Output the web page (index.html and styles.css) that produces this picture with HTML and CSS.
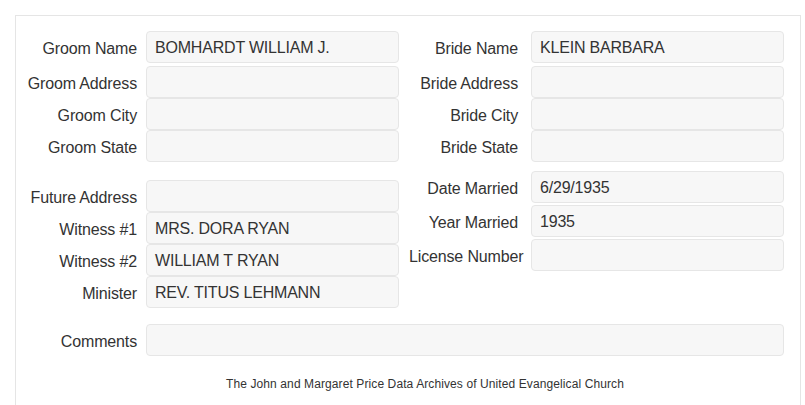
FILE: index.html
```html
<!DOCTYPE html>
<html>
<head>
<meta charset="utf-8">
<link rel="stylesheet" href="styles.css">
</head>
<body>
<div class="page">
  <div class="panel">
    <div class="section top">
      <div class="col col-left">
        <div class="field first"><label>Groom Name</label><div class="box">BOMHARDT WILLIAM J.</div></div>
        <div class="field"><label>Groom Address</label><div class="box"></div></div>
        <div class="field"><label>Groom City</label><div class="box"></div></div>
        <div class="field"><label>Groom State</label><div class="box"></div></div>
      </div>
      <div class="col col-right">
        <div class="field first"><label>Bride Name</label><div class="box">KLEIN BARBARA</div></div>
        <div class="field"><label>Bride Address</label><div class="box"></div></div>
        <div class="field"><label>Bride City</label><div class="box"></div></div>
        <div class="field"><label>Bride State</label><div class="box"></div></div>
      </div>
    </div>
    <div class="section middle">
      <div class="col col-left shifted">
        <div class="field"><label>Future Address</label><div class="box"></div></div>
        <div class="field"><label>Witness #1</label><div class="box">MRS. DORA RYAN</div></div>
        <div class="field"><label>Witness #2</label><div class="box">WILLIAM T RYAN</div></div>
        <div class="field"><label>Minister</label><div class="box">REV. TITUS LEHMANN</div></div>
      </div>
      <div class="col col-right spaced">
        <div class="field"><label>Date Married</label><div class="box">6/29/1935</div></div>
        <div class="field"><label>Year Married</label><div class="box">1935</div></div>
        <div class="field"><label>License Number</label><div class="box"></div></div>
      </div>
    </div>
    <div class="field comments"><label>Comments</label><div class="box"></div></div>
    <div class="footer">The John and Margaret Price Data Archives of United Evangelical Church</div>
  </div>
</div>
</body>
</html>
```

FILE: styles.css
```css
html, body {
  margin: 0;
  padding: 0;
  background: #ffffff;
}

body {
  font-family: "Liberation Sans", Arial, sans-serif;
  color: #333333;
}

.page {
  padding: 15px 4px 0 15px;
}

.panel {
  border: 1px solid #e5e5e5;
  border-bottom: none;
  padding: 15px 16px 40px 0;
  min-height: 400px;
  box-sizing: border-box;
}

.section {
  display: flex;
  align-items: flex-start;
}

.col {
  display: flex;
  flex-direction: column;
}

.col-left {
  width: 383px;
  margin-right: 10px;
}

.col-left .field {
  grid-template-columns: 121px 253px;
  column-gap: 9px;
}

.col-right .field {
  grid-template-columns: 109px 253px;
  column-gap: 13px;
}

.field {
  display: grid;
  height: 32px;
}

.field.first {
  margin-bottom: 3px;
}

.middle {
  margin-top: 9px;
}

.shifted {
  padding-top: 9px;
}

.spaced .field {
  margin-bottom: 2px;
}

label {
  display: block;
  text-align: right;
  white-space: nowrap;
  font-size: 16px;
  letter-spacing: -0.15px;
  line-height: 20px;
  padding-top: 8px;
}

.box {
  box-sizing: border-box;
  height: 32px;
  border: 1px solid #e6e6e6;
  border-radius: 4px;
  background: #f7f7f7;
  padding: 1px 8px 0 8px;
  font-size: 16px;
  letter-spacing: -0.2px;
  line-height: 29px;
  white-space: nowrap;
  overflow: hidden;
}

.comments {
  margin-top: 16px;
  grid-template-columns: 121px 638px;
  column-gap: 9px;
}

.footer {
  margin-top: 20px;
  padding-left: 50px;
  text-align: center;
  font-size: 12px;
  letter-spacing: 0.1px;
  line-height: 17px;
  color: #333333;
}
```
